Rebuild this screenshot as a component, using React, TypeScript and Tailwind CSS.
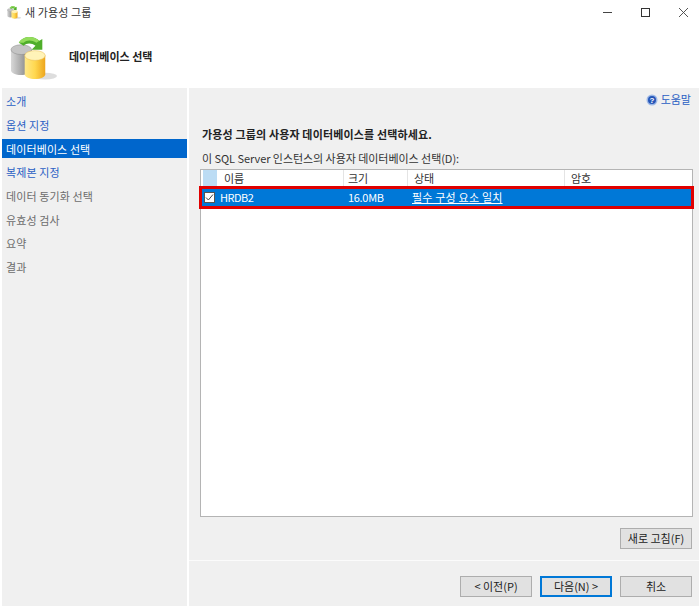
const font = { fontFamily: '"Noto Sans CJK KR", "Noto Sans", sans-serif' };

const navItems = [
  { label: '소개', tone: 'link' },
  { label: '옵션 지정', tone: 'link' },
  { label: '데이터베이스 선택', tone: 'active' },
  { label: '복제본 지정', tone: 'link' },
  { label: '데이터 동기화 선택', tone: 'muted' },
  { label: '유효성 검사', tone: 'muted' },
  { label: '요약', tone: 'muted' },
  { label: '결과', tone: 'muted' },
];

function DbIcon({ size, id }: { size: number; id: string }) {
  return (
    <svg width={size} height={size} viewBox="0 0 48 48">
      <defs>
        <linearGradient id={`${id}-gray`} x1="0" x2="1" y1="0" y2="0">
          <stop offset="0" stopColor="#d8d8d8" />
          <stop offset="0.5" stopColor="#a8a8a8" />
          <stop offset="1" stopColor="#707070" />
        </linearGradient>
        <linearGradient id={`${id}-yellow`} x1="0" x2="1" y1="0" y2="0">
          <stop offset="0" stopColor="#ffe98a" />
          <stop offset="0.5" stopColor="#ffd850" />
          <stop offset="1" stopColor="#eda51c" />
        </linearGradient>
      </defs>
      <ellipse cx="36" cy="44" rx="12" ry="3.5" fill="#cfcfcf" opacity="0.7" />
      <path d="M1 17v21c0 3 5 5 10 5s11-2 11-5V17z" fill={`url(#${id}-gray)`} />
      <ellipse cx="11.5" cy="17" rx="10.5" ry="5" fill="#c4c4c4" stroke="#8a8a8a" strokeWidth="0.5" />
      <path d="M15 23v19c0 3 5 5 10.5 5S36 45 36 42V23z" fill={`url(#${id}-yellow)`} />
      <ellipse cx="25.5" cy="23" rx="10.5" ry="5" fill="#fff3b8" stroke="#e8b84a" strokeWidth="0.5" />
      <path d="M9 10c4-7 15-8 21-2l3-2v11H22l4-4c-4-3-9-3-12 0z" fill="#4fae2a" />
      <path d="M9 10c4-7 15-8 21-2l-3 2c-5-3-10-3-13 0z" fill="#93dc5c" />
    </svg>
  );
}

function WinButton({ label, primary }: { label: string; primary?: boolean }) {
  return (
    <button
      type="button"
      className={`flex h-[21px] w-[72px] items-center justify-center bg-[#e1e1e1] text-[11px] text-[#222] border ${
        primary ? 'border-[#0078d7] border-2' : 'border-[#adadad]'
      }`}
    >
      {label}
    </button>
  );
}

export default function App() {
  return (
    <div style={font} className="flex h-[606px] w-[699px] flex-col overflow-hidden bg-white text-[11px] text-[#222]">
      {/* title bar */}
      <div className="flex h-[24px] shrink-0 items-center pl-[7px]">
        <DbIcon size={14} id="small" />
        <span className="ml-[4px] text-[11px] tracking-[0.1px] text-[#333]">새 가용성 그룹</span>
        <div className="ml-auto flex items-center gap-[29px] pr-[11px] text-[#333]">
          <svg width="9" height="9" viewBox="0 0 9 9">
            <path d="M0 4.5h9" stroke="#444" strokeWidth="1" />
          </svg>
          <svg width="9" height="9" viewBox="0 0 9 9">
            <rect x="0.5" y="0.5" width="8" height="8" fill="none" stroke="#333" strokeWidth="1" />
          </svg>
          <svg width="9" height="9" viewBox="0 0 9 9">
            <path d="M0 0l9 9M9 0l-9 9" stroke="#444" strokeWidth="0.9" />
          </svg>
        </div>
      </div>

      {/* header */}
      <div className="flex h-[64px] shrink-0 items-center pl-[10px]">
        <DbIcon size={47} id="large" />
        <span className="ml-[12px] text-[11px] font-bold text-[#222]">데이터베이스 선택</span>
      </div>

      <div className="flex min-h-0 flex-1 pl-[2px]">
        {/* wizard steps */}
        <div className="flex w-[185px] shrink-0 flex-col bg-[#f0f0f0] pt-[4px]">
          {navItems.map((item) => (
            <div
              key={item.label}
              className={`mb-[4.7px] flex h-[19px] items-center pl-[4px] tracking-[0.1px] ${
                item.tone === 'active'
                  ? 'bg-[#0066cc] text-white'
                  : item.tone === 'link'
                    ? 'text-[#2a5fc4]'
                    : 'text-[#6d6d6d]'
              }`}
            >
              {item.label}
            </div>
          ))}
        </div>

        {/* page content */}
        <div className="ml-[2px] flex min-w-0 flex-1 flex-col bg-[#f0f0f0]">
          <div className="flex h-[21px] items-center justify-end gap-[3px] pr-[8px] pt-[2px]">
            <svg width="12" height="12" viewBox="0 0 12 12">
              <circle cx="6" cy="6" r="5.5" fill="#9db8e6" />
              <circle cx="6" cy="6" r="4" fill="#2656b8" />
              <text x="6" y="8.8" textAnchor="middle" fontSize="8" fontWeight="700" fill="#fff" fontFamily="Liberation Sans">
                ?
              </text>
            </svg>
            <span className="text-[#2a5fc4]">도움말</span>
          </div>

          <div className="mt-[17px] pl-[13px] font-bold leading-[16px] tracking-[0.15px] text-[#222]">가용성 그룹의 사용자 데이터베이스를 선택하세요.</div>
          <div className="mt-[8px] pl-[13px] leading-[16px] tracking-[-0.05px] text-[#333]">이 SQL Server 인스턴스의 사용자 데이터베이스 선택(D):</div>

          {/* database grid */}
          <div className="relative ml-[11px] mr-[6px] mt-[3px] h-[348px] border border-[#b4b4b4] bg-white">
            <div className="flex h-[17px] text-[#333]">
              <div className="ml-[2px] h-full w-[14px] bg-[#bcdcf4]" />
              <div className="flex w-[127px] items-center border-r border-[#e4e4e4] pl-[7px]">이름</div>
              <div className="flex w-[64px] items-center border-r border-[#e4e4e4] pl-[4px]">크기</div>
              <div className="flex w-[157px] items-center border-r border-[#e4e4e4] pl-[6px]">상태</div>
              <div className="flex flex-1 items-center pl-[6px]">암호</div>
            </div>
            <div className="flex h-[21px] items-center bg-[#0078d7] text-white">
              <div className="ml-[3px] flex h-[11px] w-[11px] items-center justify-center border border-[#555] bg-white">
                <svg width="9" height="9" viewBox="0 0 9 9">
                  <path d="M1 4.5l2.4 2.5L8 1.5" fill="none" stroke="#444" strokeWidth="1" />
                </svg>
              </div>
              <div className="ml-[5px] w-[128px] tracking-[-0.5px]">HRDB2</div>
              <div className="w-[64px] tracking-[-0.3px]">16.0MB</div>
              <div className="tracking-[0.2px] underline">필수 구성 요소 일치</div>
            </div>
            <div className="pointer-events-none absolute left-[-2px] right-[-2px] top-[16px] h-[23px] border-[3px] border-[#e00000]" />
          </div>

          <div className="mr-[7px] mt-[11px] flex justify-end">
            <WinButton label="새로 고침(F)" />
          </div>

          <div className="mt-[11px] h-[1px] bg-[#fbfbfb]" />

          <div className="mr-[7px] mt-[15px] flex justify-end gap-[8px]">
            <WinButton label="< 이전(P)" />
            <WinButton label="다음(N) >" primary />
            <WinButton label="취소" />
          </div>
        </div>
      </div>
    </div>
  );
}
